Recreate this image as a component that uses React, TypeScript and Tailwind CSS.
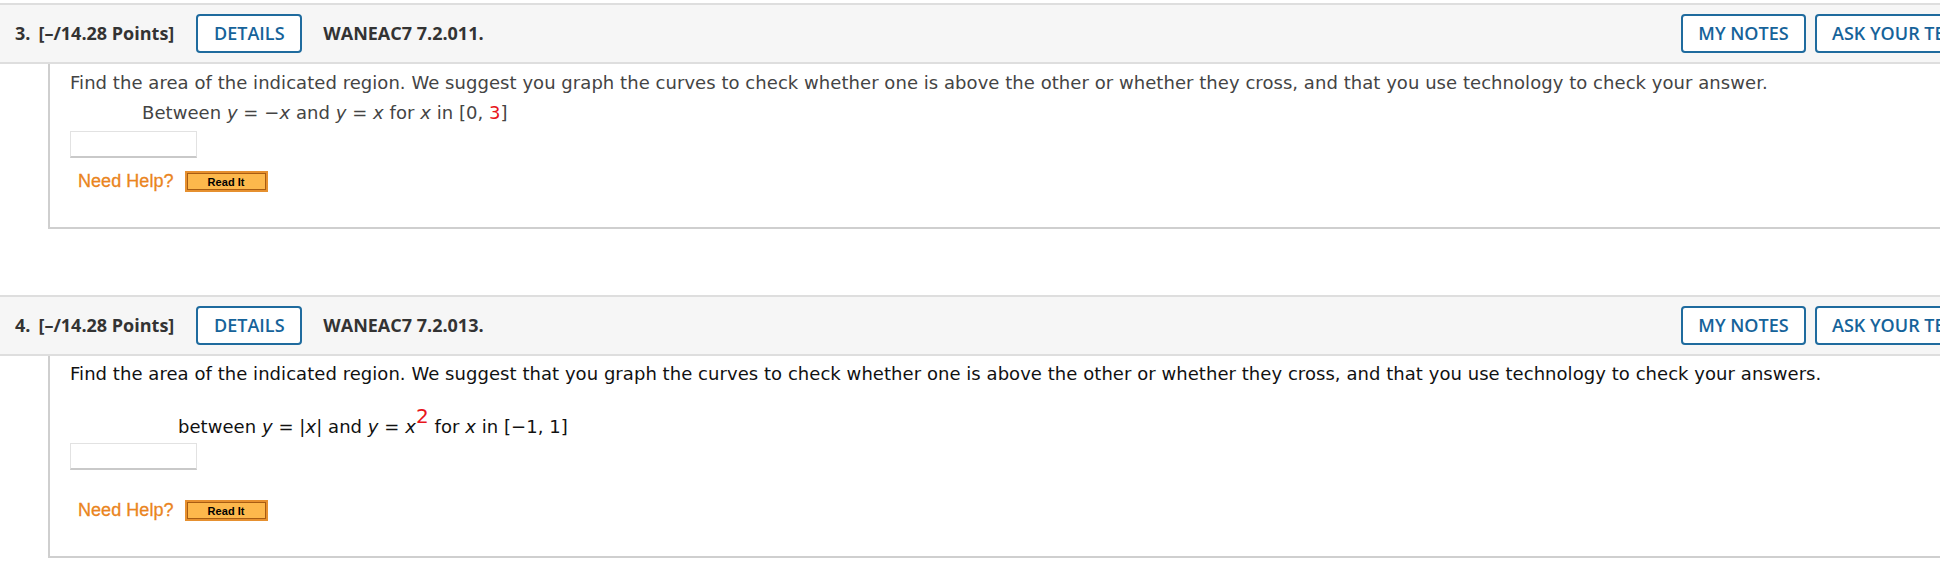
import React from 'react'

// WebAssign-style question list, two collapsed-header questions
const HEAD = "font-['Open_Sans',sans-serif]"
const BODY = "font-['DejaVu_Sans',Verdana,sans-serif] tracking-[0.05px]"

function HeaderButton({ children, className }: { children: React.ReactNode; className: string }) {
  return (
    <button
      className={`${HEAD} ${className} flex h-[39px] shrink-0 items-center rounded-[4px] border-2 border-[#1f6b9e] bg-white text-[18px] font-semibold text-[#16639a]`}
    >
      {children}
    </button>
  )
}

function QuestionHeader({ num, code }: { num: number; code: string }) {
  return (
    <div className="flex h-[61px] items-center border-y-2 border-[#dedede] bg-[#f6f6f6] pl-[15px] pr-[14px]">
      <span className={`${HEAD} text-[18px] font-bold text-[#333]`}>
        {num}.<span className="ml-[8px]">[–/14.28 Points]</span>
      </span>
      <div className="ml-[22px]">
        <HeaderButton className="w-[106px] justify-center">DETAILS</HeaderButton>
      </div>
      <span className={`${HEAD} ml-[21px] text-[18px] font-bold text-[#333]`}>{code}</span>
      <div className="ml-auto flex gap-[9px]">
        <HeaderButton className="w-[125px] justify-center">MY NOTES</HeaderButton>
        <HeaderButton className="w-[221px] pl-[15px]">ASK YOUR TEACHER</HeaderButton>
      </div>
    </div>
  )
}

function AnswerBox() {
  return <div className="h-[27px] w-[127px] border border-[#e2e2e2] border-b-2 border-b-[#c9c9c9] bg-white" />
}

function NeedHelp() {
  return (
    <div className="flex h-[21px] items-center pl-[8px]">
      <span className="font-['Liberation_Sans',Arial,sans-serif] text-[18px] leading-[21px] text-[#ea8420] [-webkit-text-stroke:0.3px_#ea8420]">
        Need Help?
      </span>
      <span className="ml-[11px] flex h-[21px] w-[83px] border-2 border-[#e6902f] bg-[#e6902f]">
        <span className="flex flex-1 items-center justify-center border border-[#a85c12] bg-[#fdb84c] font-['Liberation_Sans',Arial,sans-serif] text-[11px] font-bold text-black">
          Read It
        </span>
      </span>
    </div>
  )
}

const V = ({ children }: { children: React.ReactNode }) => <i className="italic">{children}</i>

export default function App() {
  return (
    <div className="w-[1940px] overflow-hidden bg-white">
      <div className="w-[2050px] pt-[3px]">
        {/* question 3 */}
        <QuestionHeader num={3} code="WANEAC7 7.2.011." />
        <div className={`${BODY} ml-[48px] border-b-2 border-l-2 border-[#cfcfcf] pb-[35px] pl-[20px] pt-[6px] text-[18px] leading-[26px] text-[#444]`}>
          <p>
            Find the area of the indicated region. We suggest you graph the curves to check whether one is above the
            other or whether they cross, and that you use technology to check your answer.
          </p>
          <p className="mt-[4px] pl-[72px]">
            Between <V>y</V> = −<V>x</V> and <V>y</V> = <V>x</V> for <V>x</V> in [0, <span className="text-[#e8141b]">3</span>]
          </p>
          <div className="mt-[5px]">
            <AnswerBox />
          </div>
          <div className="mt-[13px]">
            <NeedHelp />
          </div>
        </div>

        {/* question 4 */}
        <div className="mt-[66px]">
          <QuestionHeader num={4} code="WANEAC7 7.2.013." />
        </div>
        <div className={`${BODY} ml-[48px] border-b-2 border-l-2 border-[#cfcfcf] pb-[35px] pl-[20px] pt-[5px] text-[18px] leading-[26px] text-[#111]`}>
          <p>
            Find the area of the indicated region. We suggest that you graph the curves to check whether one is above
            the other or whether they cross, and that you use technology to check your answers.
          </p>
          <p className="mt-[26px] pl-[108px]">
            between <V>y</V> = |<V>x</V>| and <V>y</V> = <V>x</V>
            <span className="relative -top-[10px] text-[20px] text-[#e8141b]">2</span> for <V>x</V> in [−1, 1]
          </p>
          <div className="mt-[3px]">
            <AnswerBox />
          </div>
          <div className="mt-[30px]">
            <NeedHelp />
          </div>
        </div>
      </div>
    </div>
  )
}
